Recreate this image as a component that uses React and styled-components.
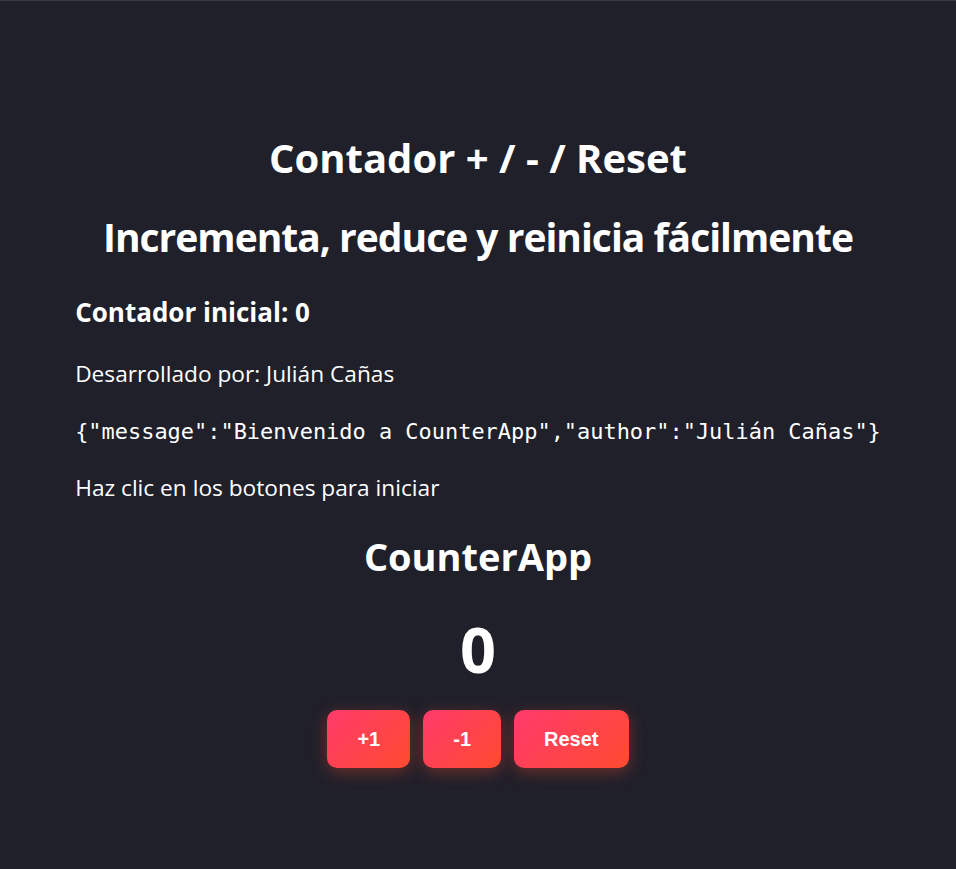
import React, { useState } from 'react';
import styled, { createGlobalStyle } from 'styled-components';

const GlobalStyle = createGlobalStyle`
  html {
    border-top: 1px solid #3b3b3e;
  }
  body {
    margin: 0;
    background-color: #20202a;
    color: #ffffff;
    font-family: "Open Sans", "Noto Sans", sans-serif;
  }
`;

// Styled Components
const Page = styled.div`
  display: flex;
  justify-content: center;
  min-height: 868px;
  padding-top: 133px;
  box-sizing: border-box;
`;

const Main = styled.main`
  width: fit-content;
  display: flex;
  flex-direction: column;
`;

const Title = styled.h1`
  margin: 0 0 ${(p) => p.$gap || 0}px;
  font-size: ${(p) => p.$size || 40}px;
  letter-spacing: ${(p) => p.$tracking || 0}px;
  line-height: 48px;
  font-weight: 700;
  text-align: center;
  white-space: nowrap;
`;

const Subtitle = styled.h3`
  margin: 0 0 32px;
  font-size: 26px;
  line-height: 32px;
  font-weight: 700;
`;

const Text = styled.p`
  margin: 0 0 ${(p) => p.$gap || 0}px;
  font-size: 22.7px;
  line-height: 28px;
`;

const Json = styled.pre`
  margin: 0 0 28px;
  font-family: "DejaVu Sans Mono", "Liberation Mono", monospace;
  font-size: 21.95px;
  line-height: 28px;
`;

const Counter = styled.section`
  display: flex;
  flex-direction: column;
  align-items: center;
`;

const AppName = styled.h2`
  margin: 0;
  font-size: 38px;
  line-height: 44px;
  font-weight: 700;
`;

const Count = styled.div`
  margin-top: 35px;
  font-size: 63px;
  line-height: 72px;
  font-weight: 700;
`;

const Buttons = styled.div`
  display: flex;
  gap: 13px;
  margin-top: 25px;
`;

const Button = styled.button`
  border: none;
  border-radius: 10px;
  padding: 17px 30px;
  font-family: "Liberation Sans", Arial, sans-serif;
  font-size: 20px;
  line-height: 24px;
  font-weight: 700;
  color: #ffffff;
  background: linear-gradient(135deg, #ff3a6c, #ff4b2f);
  box-shadow: 0 4px 16px rgba(255, 75, 47, 0.35);
  cursor: pointer;
`;

const App = () => {
  const [count, setCount] = useState(0);
  const info = { message: 'Bienvenido a CounterApp', author: 'Julián Cañas' };

  return (
    <>
      <GlobalStyle />
      <Page>
        <Main>
          <Title $gap={31}>Contador + / - / Reset</Title>
          <Title $gap={35} $size={39} $tracking={-1}>
            Incrementa, reduce y reinicia fácilmente
          </Title>
          <Subtitle>Contador inicial: 0</Subtitle>
          <Text $gap={30}>Desarrollado por: Julián Cañas</Text>
          <Json>{JSON.stringify(info)}</Json>
          <Text $gap={32}>Haz clic en los botones para iniciar</Text>
          <Counter>
            <AppName>CounterApp</AppName>
            <Count>{count}</Count>
            <Buttons>
              <Button onClick={() => setCount(count + 1)}>+1</Button>
              <Button onClick={() => setCount(count - 1)}>-1</Button>
              <Button onClick={() => setCount(0)}>Reset</Button>
            </Buttons>
          </Counter>
        </Main>
      </Page>
    </>
  );
};

export default App;
